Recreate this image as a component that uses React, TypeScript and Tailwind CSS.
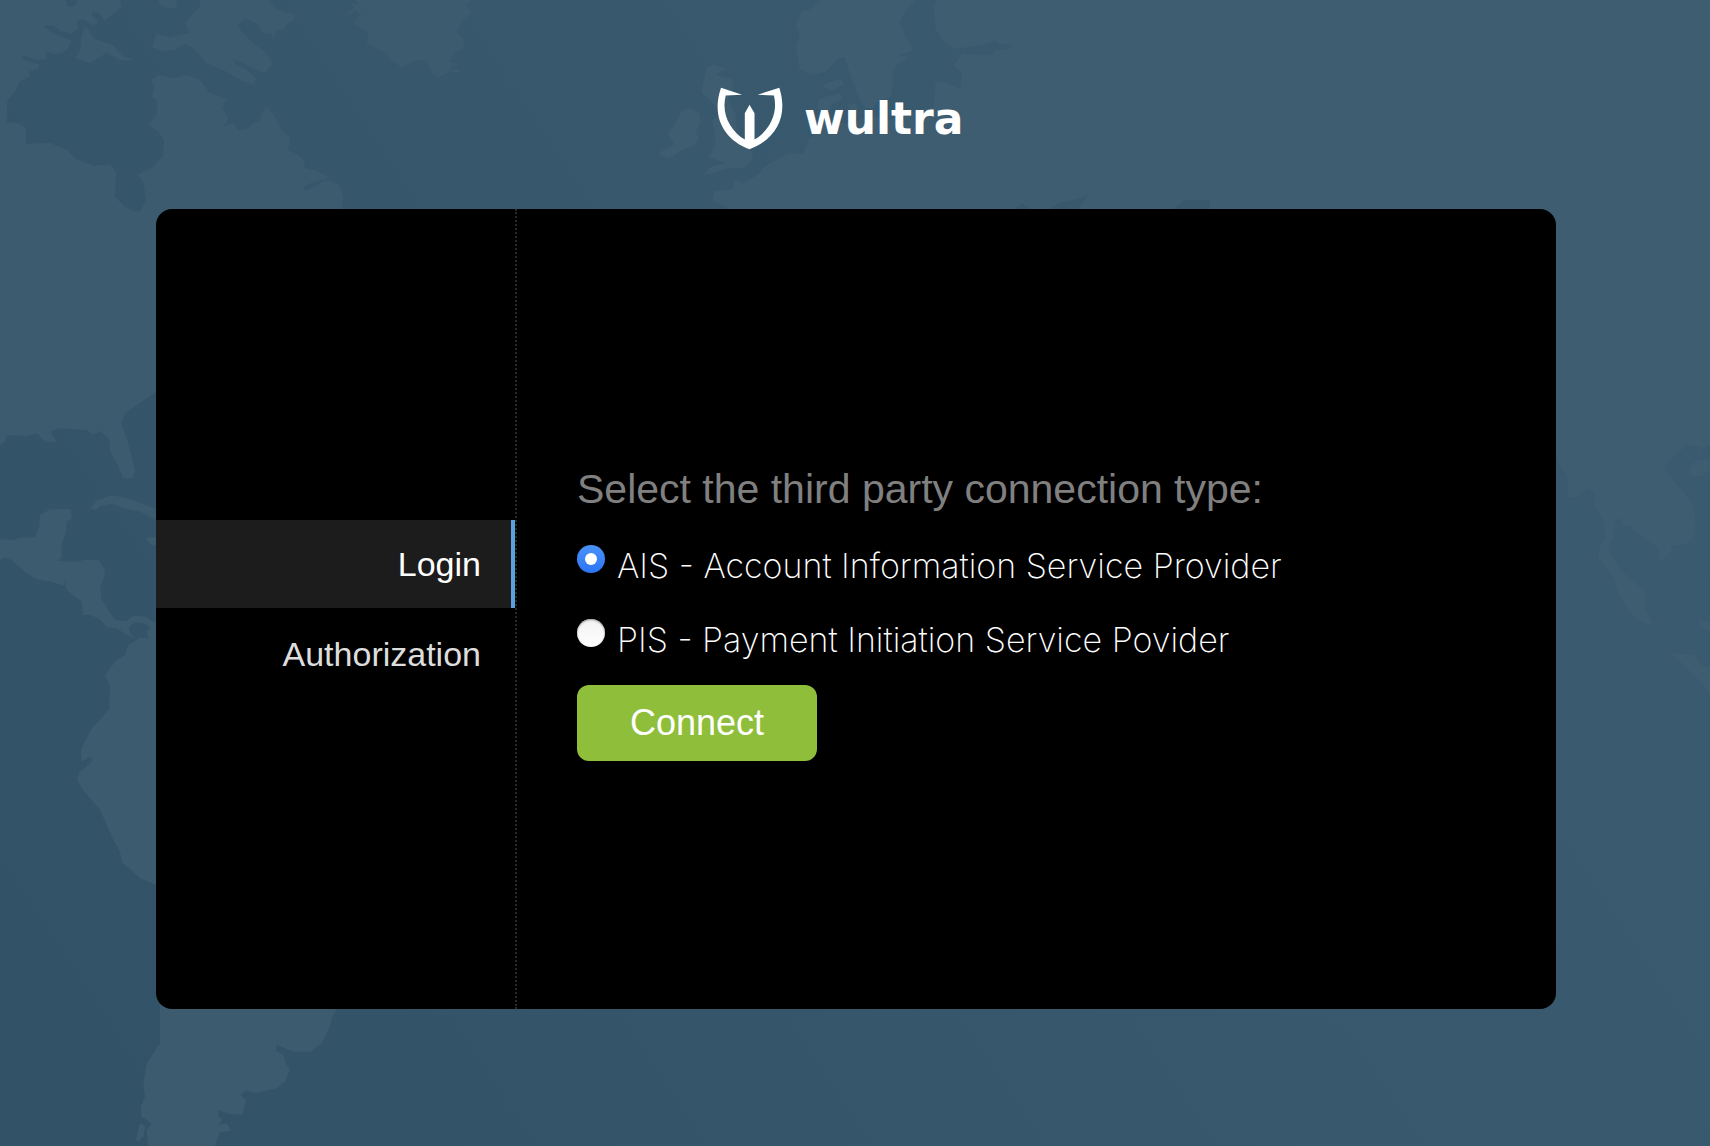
import { useState } from "react";

const steps = [
  { id: "login", label: "Login" },
  { id: "authorization", label: "Authorization" },
];

const connectionTypes = [
  { id: "ais", label: "AIS - Account Information Service Provider" },
  { id: "pis", label: "PIS - Payment Initiation Service Povider" },
];

function WorldMap() {
  return (
    <svg
      className="absolute inset-0 -z-10 h-full w-full"
      viewBox="0 0 1710 1146"
      preserveAspectRatio="xMidYMid slice"
      aria-hidden="true"
    >
      <defs>
        <linearGradient id="sea" gradientUnits="userSpaceOnUse" x1="150" y1="1100" x2="1500" y2="200">
          <stop offset="0" stopColor="#325267" />
          <stop offset="0.6" stopColor="#37586d" />
          <stop offset="1" stopColor="#395a6f" />
        </linearGradient>
      </defs>
      <rect width="1710" height="1146" fill="url(#sea)" />

      {/* Americas and Greenland */}
      <g transform="scale(0.33333)" fill="#3d5b6f">
        <path d="M0 0H195L205 20L225 18L232 0H360L365 20L335 45L312 62L300 40L280 33L275 45L295 66L278 76L250 58L230 62L235 85L215 103L180 92L160 76L130 78L150 92L185 112L212 120L205 145L190 158L165 163L138 155L140 175L118 182L65 165L70 178L100 188L118 192L115 208L85 215L90 230L58 245L45 275L22 300L20 365L60 372L78 385L78 432L150 428L200 450L225 475L280 498L330 493L348 515L345 590L375 620L400 632L420 635L438 600L430 545L412 525L460 500L490 465L492 420L475 395L445 375L470 345V300L455 290L465 260L452 240L475 225L520 235L560 225L600 240L630 280L680 295L668 325L685 355L670 380L700 370L715 390L745 385L760 370L780 360L783 340L800 318L825 350L845 390L870 415L865 450L895 465L912 480L915 505L950 512L985 530L975 538L940 545L912 560L915 572L940 562L975 542L1000 545L1020 560L1030 590L1025 627V1000L600 1100L468 1175L375 1240L365 1270L385 1330L405 1410L400 1432L385 1437L368 1432L345 1380L328 1350L330 1320L300 1293L280 1305L260 1290L175 1285L150 1295L170 1325L155 1327L130 1320L110 1300L80 1308L20 1305L15 1325L0 1335Z" />
        <path d="M600 0H805L825 25L885 45L880 65L862 70L850 90L830 92L822 118L812 102L790 100L770 70L735 55L712 75L730 100L760 130L800 160L818 190L795 220L775 212L740 195L700 176L705 190L740 210L768 235L762 255L720 240L680 215L620 190L585 150L555 130L530 148L490 155L455 140L470 102L510 112L570 98L555 70L580 40L600 20Z" />
        <path d="M475 0H530V24H500L480 15ZM252 85L262 85L280 115L340 135L365 165L398 180H360L320 158L270 190L225 175L240 150L245 110Z" />
        <path d="M1050 10L1085 12L1110 35L1080 42L1065 30L1048 48L1042 38L1062 22Z" />
        <path d="M1065 0L1095 30L1060 68L1105 100L1100 130L1160 160L1170 178L1205 203L1250 180L1280 185L1300 225L1315 235L1345 217H1378V208L1350 210L1355 195H1385L1350 185L1360 158L1392 145L1390 115L1370 98L1385 65L1415 38L1398 15L1420 0Z" />
        <path
          fillRule="evenodd"
          d="M0 1618L45 1620L55 1614L105 1612L118 1580L120 1545L150 1528H212L215 1555L200 1565L198 1600L185 1630V1675L170 1683L235 1685L250 1680H295L315 1710L313 1730L300 1760L305 1800L345 1860L380 1864L400 1848L430 1847L468 1868L520 1900L1100 2000V2700L1010 3027L995 3055L990 3080L965 3130L930 3155H880L830 3135L828 3152L850 3165L857 3190L870 3210L855 3245L830 3265L770 3278L735 3272L722 3285L738 3300L728 3343H690L655 3330V3350L668 3358L655 3375L680 3370L695 3393L660 3396L645 3438H445L440 3390L455 3370L425 3350L422 3320L435 3290L430 3250L440 3190L480 3130V3027L468 2655L420 2635L365 2585L360 2555L340 2520L300 2430L245 2365L230 2335L240 2315L270 2290L278 2278L270 2272L245 2285L242 2250L275 2185L300 2160L328 2125L330 2055L315 2027L345 1985L375 1965L385 1935L415 1917L385 1908L350 1885L320 1880L300 1858L270 1845L250 1845L245 1805L200 1770L195 1745L190 1757L155 1745L110 1738L80 1720L35 1680L15 1673L0 1680ZM388 1880L405 1867L430 1870L450 1882L440 1895L446 1915L405 1913L390 1898Z"
        />
        <path d="M272 1525L290 1502L335 1485L400 1500L468 1527V1560L420 1535L380 1527L335 1511L300 1518L285 1530ZM436 1618L450 1610L480 1614V1636H455ZM408 3420L420 3370L436 3378L430 3410L415 3425Z" />
      </g>

      {/* Europe */}
      <g transform="translate(480 0) scale(0.35714)" fill="#3f5d71">
        <path d="M955 0L925 25L900 32L885 75L895 95L885 130L895 195L930 210L970 200L1000 165L1020 160L1040 220L1060 275L1080 303L1100 303L1112 285L1150 272L1158 235L1155 205L1170 180L1200 160L1172 155L1215 140L1190 100L1175 60L1195 25L1220 0Z" />
        <path d="M1280 0L1270 20L1275 80L1300 120L1330 137L1380 130L1420 122L1445 112L1448 122L1488 126V134L1440 143L1435 155L1350 150L1325 185L1350 205L1345 250L1325 240L1300 228L1275 232L1270 300L1220 310L1150 335L1100 325L1020 345L950 340L945 370L920 390L905 430L860 430L800 465L775 490L735 515L712 500L710 530L655 535L650 560L690 580L720 610L730 640V800H2800V0Z" />
        <path d="M635 185L655 182L688 192L660 210L708 222V250L695 275L715 320L720 380L760 425L765 445L740 470L690 472L650 485L625 490L650 465L690 458L640 440L660 400L650 335L680 320L640 275L620 260ZM565 310L590 303L615 318L618 345L605 365L612 390L600 408L565 420L530 445L500 430L525 412L545 405L525 375L545 348Z" />
        <path d="M950 275L1010 262L1015 280L985 290L975 318L945 305ZM955 240L1010 220L1018 235L985 255ZM1030 292L1050 288L1060 305L1040 318Z" />
      </g>

      {/* Asia */}
      <g transform="translate(1550 430) scale(0.33333)" fill="#3f5d71">
        <path d="M480 45L455 55L440 80L450 50L410 45L375 78L345 110L350 128L400 185L430 225L438 280L430 328L400 345L368 348L360 370L328 398L322 350L285 330L240 288L220 288L215 268H195L190 320L175 360L205 410L245 450L285 485L288 545L308 575L300 585L265 572L230 535L205 490L190 440L165 410L145 385L150 350L165 320L163 285L150 255L135 230V190L110 172L80 205L55 200L50 135L18 90L-600 100V-1290H490Z" />
        <path d="M418 115L440 90L480 88V118L455 140L420 135ZM442 570L480 575V602L455 595ZM365 668L430 675L455 705L480 712V790L440 745L400 705Z" />
      </g>
      <path d="M1014 209L1022 203L1030 209ZM1050 209L1058 203L1078 199L1088 195L1078 209ZM1173 209L1184 200H1210V209Z" fill="#3a586c" />
    </svg>
  );
}

function Logo() {
  return (
    <div className="flex w-[280px] items-center gap-5 text-white">
      <svg className="h-[63px] w-[68px] shrink-0" viewBox="18 20 203 188" fill="currentColor" aria-hidden="true">
        <path d="M33 22L96 43L47 45C33 100 60 150 104 177V98L118 73L133 98V177C177 150 204 100 191 45L142 43L207 22C234 105 200 175 118 206C38 175 4 105 33 22Z" />
      </svg>
      <span className="font-['DejaVu_Sans',sans-serif] text-[44px] leading-[56px] font-bold">wultra</span>
    </div>
  );
}

export default function App() {
  const [type, setType] = useState("ais");

  return (
    <div className="relative isolate flex min-h-screen flex-col items-center overflow-hidden bg-[#37586d] pb-[137px] pl-0.5 font-['Liberation_Sans',Arial,sans-serif]">
      <WorldMap />

      <header className="flex h-[209px] items-center pt-7">
        <Logo />
      </header>

      <main className="flex min-h-[800px] w-full max-w-[1400px] flex-1 overflow-hidden rounded-2xl bg-black">
        <nav className="flex w-[361px] shrink-0 flex-col justify-center gap-0.5 border-r-2 border-dotted border-[#2a2a2a]">
          {steps.map((step) => (
            <a
              key={step.id}
              href={"#" + step.id}
              aria-current={step.id === "login" ? "step" : undefined}
              className="border-r-4 border-transparent pr-[30px] text-right text-[34px] leading-[88px] text-[#dddddd] aria-[current=step]:border-[#5a9fe0] aria-[current=step]:bg-[#1c1c1c] aria-[current=step]:text-white"
            >
              {step.label}
            </a>
          ))}
        </nav>

        <form
          className="flex flex-1 flex-col items-start justify-center gap-2 px-[60px]"
          onSubmit={(e) => e.preventDefault()}
        >
          <fieldset className="contents">
            <legend className="contents">
              <span className="text-[41px] leading-[64px] text-[#808080]">
                Select the third party connection type:
              </span>
            </legend>
            <div>
              {connectionTypes.map((item) => (
                <label key={item.id} className="flex items-start gap-3">
                  <input
                    type="radio"
                    name="connection-type"
                    value={item.id}
                    checked={type === item.id}
                    onChange={() => setType(item.id)}
                    className="mt-4 grid size-7 shrink-0 appearance-none place-items-center rounded-full bg-linear-to-b from-[#f2f2f2] to-white inset-shadow-[0_1px_2px_#999999] before:size-3 before:rounded-full checked:from-[#4a93f8] checked:to-[#2c74f5] checked:inset-shadow-none checked:before:bg-white"
                  />
                  <span className="font-['Inter',sans-serif] text-[34px] leading-[74px] font-extralight text-white">
                    {item.label}
                  </span>
                </label>
              ))}
            </div>
          </fieldset>
          <button type="submit" className="h-[76px] w-60 rounded-xl bg-[#8fbe3a] text-4xl text-white">
            Connect
          </button>
        </form>
      </main>
    </div>
  );
}
